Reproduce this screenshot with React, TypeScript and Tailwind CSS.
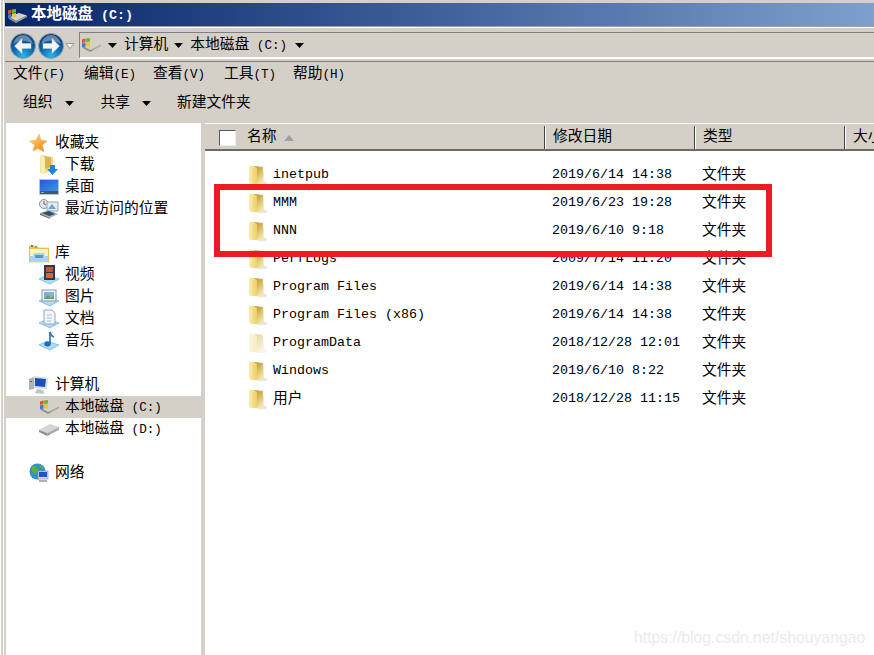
import React from "react";

const CJK = "font-['Liberation_Mono','Noto_Sans_CJK_SC',monospace]";

function Folder({ faded = false }: { faded?: boolean }) {
  const id = faded ? "ff" : "fn";
  return (
    <svg width="19" height="20" viewBox="0 0 19 20" style={{ opacity: faded ? 0.4 : 1 }} className="shrink-0">
      <defs>
        <linearGradient id={id + "a"} x1="0" y1="0" x2="1" y2="0">
          <stop offset="0" stopColor="#fbeeaa" />
          <stop offset="1" stopColor="#eccf6c" />
        </linearGradient>
        <linearGradient id={id + "b"} x1="0" y1="0" x2="0.6" y2="1">
          <stop offset="0" stopColor="#b98c1e" />
          <stop offset="1" stopColor="#f6e8a6" />
        </linearGradient>
      </defs>
      <path d="M8 17 L18 17 L17 20 L8 20Z" fill="#cfcfcf" opacity="0.55" />
      <path d="M5 1 L14 2 L15 18 L6 19Z" fill={`url(#${id}b)`} />
      <path d="M0 2 L1.5 0.5 L5 1 L8 3 L8 19 L1.5 19 L0 17Z" fill={`url(#${id}a)`} />
    </svg>
  );
}

function Drive() {
  return (
    <svg width="20" height="14" viewBox="0 0 20 14">
      <path d="M2 8 L12 4 L20 6.5 L9 12Z" fill="#d2d2c8" />
      <path d="M2 8 L9 12 L9 14 L2 10Z" fill="#8f8f86" />
      <path d="M9 12 L20 6.5 L20 8 L9 14Z" fill="#a5a59c" />
      <rect x="9" y="12" width="2" height="1" fill="#4aa84a" />
      <path d="M1 1.5 L4.5 0.5 L4.5 4 L1 5Z" fill="#e5522d" />
      <path d="M5 0.5 L9 0 L9 3.5 L5 4Z" fill="#6fb33f" />
      <path d="M1 5.5 L4.5 4.5 L4.5 8.5 L1 9.5Z" fill="#3c79d8" />
      <path d="M5 4.5 L9 4 L9 8 L5 8.5Z" fill="#f2c230" />
    </svg>
  );
}

function DriveGray() {
  return (
    <svg width="20" height="14" viewBox="0 0 20 14">
      <path d="M0 8 L11 2 L20 5 L8 11Z" fill="#d6d6d6" />
      <path d="M0 8 L8 11 L8 14 L0 10Z" fill="#8f8f8f" />
      <path d="M8 11 L20 5 L20 8 L8 14Z" fill="#adadad" />
      <rect x="9" y="12" width="2" height="1" fill="#5bb04a" />
    </svg>
  );
}

function Star() {
  return (
    <svg width="18" height="20" viewBox="0 0 18 20">
      <defs>
        <linearGradient id="st" x1="0" y1="0" x2="0.6" y2="1">
          <stop offset="0" stopColor="#ffe27a" />
          <stop offset="1" stopColor="#f08a1d" />
        </linearGradient>
      </defs>
      <path d="M10 1 L12 7 L18 8 L13.5 12 L15 19 L9 15.5 L4 18 L5.5 12 L0.5 8 L7 7Z" fill="url(#st)" stroke="#f3b14d" strokeWidth="0.5" />
    </svg>
  );
}

function Download() {
  return (
    <svg width="19" height="20" viewBox="0 0 19 20">
      <path d="M1 1 L5 0 L8 2 L14 2 L14 16 L3 19 L1 17Z" fill="#f3dc8c" />
      <path d="M5 1 L12 2 L12 12 L6 14Z" fill="#d9b64f" />
      <path d="M1 1 L6 2 L6 19 L2 19Z" fill="#fbeeb4" />
      <path d="M11 10 L16 10 L16 14 L19 14 L13.5 20 L8 14 L11 14Z" fill="#1f86d6" />
    </svg>
  );
}

function Desktop() {
  return (
    <svg width="20" height="16" viewBox="0 0 20 16">
      <rect x="0" y="0" width="20" height="16" fill="#b7c3d0" />
      <defs>
        <linearGradient id="dk" x1="0" y1="0" x2="1" y2="1">
          <stop offset="0" stopColor="#1d5ed0" />
          <stop offset="1" stopColor="#3c93ec" />
        </linearGradient>
      </defs>
      <rect x="1" y="1" width="18" height="11" fill="url(#dk)" />
      <rect x="1" y="12" width="18" height="3" fill="#3c5a73" />
      <rect x="2" y="13" width="3" height="1" fill="#7fc46f" />
    </svg>
  );
}

function Recent() {
  return (
    <svg width="20" height="20" viewBox="0 0 20 20">
      <circle cx="5" cy="5" r="4.5" fill="#dfe3e6" stroke="#8f979c" />
      <path d="M5 2 L5 5 L7 6" stroke="#666" fill="none" />
      <path d="M8 3 L19 3 L19 12 L8 12Z" fill="#e6ebf0" stroke="#9aa5ad" />
      <path d="M9 10 L13 5 L17 10Z" fill="#63a6e0" />
      <path d="M1 14 L10 11 L19 15 L11 19Z" fill="#a7adb2" />
      <path d="M3 14 L10 12 L16 15 L10 17Z" fill="#33506e" />
      <path d="M1 14 L11 19 L11 20 L1 16Z" fill="#777" />
    </svg>
  );
}

function Library() {
  return (
    <svg width="20" height="19" viewBox="0 0 20 19">
      <path d="M0 2 L7 2 L9 4 L20 4 L20 18 L0 18Z" fill="#e9c95f" stroke="#c9a640" strokeWidth="0.5" />
      <rect x="2" y="1" width="2" height="2" fill="#d9503a" />
      <rect x="6" y="2" width="2" height="2" fill="#6fb33f" />
      <rect x="1" y="5" width="18" height="13" fill="#fdf3c0" />
      <path d="M1 12 L4 12 L5 9 L15 9 L16 12 L19 12 L19 18 L1 18Z" fill="#a9d3ee" />
      <rect x="6" y="11" width="8" height="3" fill="#5b93bf" />
    </svg>
  );
}

function LibBase() {
  return <path d="M0 14 L8 10 L20 14 L11 19Z" fill="#aedcf7" stroke="#6db2de" strokeWidth="0.7" />;
}

function Video() {
  return (
    <svg width="20" height="20" viewBox="0 0 20 20">
      <LibBase />
      <rect x="5" y="0" width="11" height="15" fill="#263b4d" />
      <rect x="7" y="2" width="7" height="5" fill="#c8512c" />
      <rect x="7" y="8" width="7" height="5" fill="#d66a2f" />
    </svg>
  );
}

function Pics() {
  return (
    <svg width="20" height="20" viewBox="0 0 20 20">
      <LibBase />
      <rect x="3" y="3" width="14" height="11" fill="#eef2f5" stroke="#8a99a6" />
      <rect x="5" y="5" width="10" height="7" fill="#7fb2dc" />
      <path d="M5 12 L9 8 L12 11 L15 9 L15 12Z" fill="#6e9c57" />
    </svg>
  );
}

function Docs() {
  return (
    <svg width="20" height="20" viewBox="0 0 20 20">
      <LibBase />
      <path d="M5 1 L13 1 L16 4 L16 15 L5 15Z" fill="#f2f5f8" stroke="#9aa8b3" />
      <path d="M8 6 L13 6 M8 9 L13 9 M8 12 L12 12" stroke="#9ec3de" />
    </svg>
  );
}

function Music() {
  return (
    <svg width="20" height="20" viewBox="0 0 20 20">
      <LibBase />
      <path d="M11 1 L11 13" stroke="#1c6fc0" strokeWidth="1.6" />
      <path d="M11 1 Q12 5 15 6" stroke="#1c6fc0" strokeWidth="1.4" fill="none" />
      <ellipse cx="8.5" cy="13" rx="3.2" ry="2.5" fill="#1c6fc0" />
    </svg>
  );
}

function Computer() {
  return (
    <svg width="20" height="19" viewBox="0 0 20 19">
      <path d="M0 3 L5 1 L5 13 L0 14Z" fill="#aab4bf" />
      <path d="M5 0 L19 2 L18 13 L5 12Z" fill="#d8dee4" />
      <path d="M6 2 L17 3 L16 11 L6 10Z" fill="#1b4fbd" />
      <path d="M8 13 L14 14 L15 18 L6 17Z" fill="#bcc4cb" />
      <rect x="1" y="5" width="2" height="1" fill="#54606b" />
    </svg>
  );
}

function Network() {
  return (
    <svg width="20" height="20" viewBox="0 0 20 20">
      <circle cx="8.5" cy="8.5" r="8" fill="#2f8fd3" />
      <path d="M3 3 Q8 3 9 7 Q8 11 5 11 Q2 9 3 3Z M10 1 Q14 2 15 6 L11 5Z" fill="#5daf3c" />
      <rect x="9" y="8" width="10" height="8" fill="#d5dbe0" stroke="#7c8892" strokeWidth="0.6" />
      <rect x="10" y="9" width="8" height="5" fill="#1f55c0" />
      <rect x="10" y="17" width="8" height="2" fill="#aab3ba" />
    </svg>
  );
}

function NavButton({ dir }: { dir: "l" | "r" }) {
  const id = "nb" + dir;
  return (
    <svg width="26" height="26" viewBox="0 0 26 26">
      <defs>
        <radialGradient id={id} cx="0.5" cy="0.9" r="0.85">
          <stop offset="0" stopColor="#2ab4ea" />
          <stop offset="0.55" stopColor="#0b64a8" />
          <stop offset="1" stopColor="#0a3a70" />
        </radialGradient>
      </defs>
      <circle cx="13" cy="13" r="12.5" fill={`url(#${id})`} stroke="#8fa6b8" />
      <path d="M3 11 Q13 4 23 11 Q20 2 13 2 Q6 2 3 11Z" fill="#ffffff" opacity="0.35" />
      <g transform={dir === "r" ? "rotate(180 13 13)" : undefined}>
        <path d="M4.5 13 L12 5.5 L12 10.5 L21 10.5 L21 15.5 L12 15.5 L12 20.5Z" fill="#f2f4f6" stroke="#c8ced3" strokeWidth="0.5" />
      </g>
    </svg>
  );
}

function Tri({ className = "" }: { className?: string }) {
  return (
    <svg width="9" height="5" viewBox="0 0 9 5" className={`shrink-0 ${className}`}>
      <path d="M0 0 L9 0 L4.5 5Z" fill="#000000" />
    </svg>
  );
}

function DriveLabel({ letter, latin }: { letter: string; latin: string }) {
  return (
    <span className="whitespace-pre">
      本地磁盘<span className={latin}> ({letter}:)</span>
    </span>
  );
}

type Side = { key: string; label: React.ReactNode; icon: React.ReactNode; sub?: boolean; sel?: boolean };

const LATIN_SM = "text-[12.6px]";

const groups: Side[][] = [
  [
    { key: "fav", label: "收藏夹", icon: <Star /> },
    { key: "dl", label: "下载", icon: <Download />, sub: true },
    { key: "desk", label: "桌面", icon: <Desktop />, sub: true },
    { key: "rec", label: "最近访问的位置", icon: <Recent />, sub: true },
  ],
  [
    { key: "lib", label: "库", icon: <Library /> },
    { key: "vid", label: "视频", icon: <Video />, sub: true },
    { key: "pic", label: "图片", icon: <Pics />, sub: true },
    { key: "doc", label: "文档", icon: <Docs />, sub: true },
    { key: "mus", label: "音乐", icon: <Music />, sub: true },
  ],
  [
    { key: "pc", label: "计算机", icon: <Computer /> },
    { key: "c", label: <DriveLabel letter="C" latin={LATIN_SM} />, icon: <Drive />, sub: true, sel: true },
    { key: "d", label: <DriveLabel letter="D" latin={LATIN_SM} />, icon: <DriveGray />, sub: true },
  ],
  [{ key: "net", label: "网络", icon: <Network /> }],
];

const files: { name: string; date: string; faded?: boolean }[] = [
  { name: "inetpub", date: "2019/6/14 14:38" },
  { name: "MMM", date: "2019/6/23 19:28" },
  { name: "NNN", date: "2019/6/10 9:18" },
  { name: "PerfLogs", date: "2009/7/14 11:20" },
  { name: "Program Files", date: "2019/6/14 14:38" },
  { name: "Program Files (x86)", date: "2019/6/14 14:38" },
  { name: "ProgramData", date: "2018/12/28 12:01", faded: true },
  { name: "Windows", date: "2019/6/10 8:22" },
  { name: "用户", date: "2018/12/28 11:15" },
];

const menus = [
  { t: "文件", k: "(F)", w: "w-[71px]" },
  { t: "编辑", k: "(E)", w: "w-[69px]" },
  { t: "查看", k: "(V)", w: "w-[71px]" },
  { t: "工具", k: "(T)", w: "w-[69px]" },
  { t: "帮助", k: "(H)", w: "w-[71px]" },
];

export default function App() {
  return (
    <div className={`w-[874px] h-[655px] overflow-hidden relative bg-white border-l border-l-white text-[14.75px] leading-none text-black ${CJK}`}>
      <div className="h-full border-l-2 border-l-[#d4d0c8]">
        <div className="h-full border-l border-l-white">
          <div className="flex flex-col h-full pl-[2px] pt-[3px] bg-[#d4d0c8]">
            {/* title bar */}
            <div className="flex items-center h-[23px] shrink-0 -ml-px pl-[2px] pt-[2px] gap-[4px] bg-gradient-to-r from-[#0a246a] to-[#7f9fcc] text-white font-bold text-[15.5px]">
              <Drive />
              <span className="whitespace-pre">
                本地磁盘<span className="text-[13.33px]"> (C:)</span>
              </span>
            </div>
            <div className="h-px shrink-0 -ml-px bg-[#a0a0a0]" />
            {/* nav */}
            <div className="flex items-center h-[34px] shrink-0 -ml-px pt-[2px] pl-[5px] border-t border-t-white">
              <div className="flex items-center gap-[2px]">
                <NavButton dir="l" />
                <NavButton dir="r" />
              </div>
              <svg width="10" height="6" viewBox="0 0 10 6" className="ml-[1px] shrink-0">
                <path d="M1 0.5 L9 0.5 L5 5.5Z" fill="#f4f4f4" stroke="#8a8a8a" strokeWidth="0.8" />
              </svg>
              <div className="flex items-center flex-1 h-[27px] ml-[4px] pl-[1px] bg-[#d4d0c8] border-l border-t border-l-[#808080] border-t-[#808080] border-b-2 border-b-white">
                <Drive />
                <Tri className="ml-[7px]" />
                <span className="ml-[7px]">计算机</span>
                <Tri className="ml-[6px]" />
                <span className="ml-[7px]">
                  <DriveLabel letter="C" latin={LATIN_SM} />
                </span>
                <Tri className="ml-[8px]" />
              </div>
            </div>
            {/* menu */}
            <div className="flex items-center h-[26px] shrink-0 -ml-px pl-[8px] border-t border-t-[#808080]">
              {menus.map((m) => (
                <span key={m.t} className={`${m.w} whitespace-pre`}>
                  {m.t}
                  <span className={LATIN_SM}>{m.k}</span>
                </span>
              ))}
            </div>
            {/* toolbar */}
            <div className="flex items-center h-[33px] shrink-0 -ml-px pl-[18px]">
              <span>组织</span>
              <Tri className="ml-[12px]" />
              <span className="ml-[27px]">共享</span>
              <Tri className="ml-[12px]" />
              <span className="ml-[26px]">新建文件夹</span>
            </div>
            {/* body */}
            <div className="flex flex-1 min-h-0 mt-[3px]">
              {/* sidebar */}
              <div className="w-[195px] shrink-0 bg-white pt-[9px] flex flex-col gap-[22px]">
                {groups.map((g, i) => (
                  <div key={i} className="flex flex-col">
                    {g.map((s) => (
                      <div key={s.key} className={`flex items-center h-[22px] ${s.sel ? "bg-[#d4d0c8]" : ""} ${s.sub ? "pl-[33px]" : "pl-[23px]"}`}>
                        <span className="w-[26px] h-[20px] shrink-0 flex items-center">{s.icon}</span>
                        <span>{s.label}</span>
                      </div>
                    ))}
                  </div>
                ))}
              </div>
              {/* list */}
              <div className="flex-1 min-w-0 ml-[4px] bg-white flex flex-col">
                <div className="flex h-[28px] shrink-0 pt-[2px] bg-[#d4d0c8] border-t border-t-white border-b-2 border-b-[#6b6b6b]">
                  <div className="flex items-center w-[340px] pl-[14px] border-r border-r-[#404040] shrink-0">
                    <span className="w-[17px] h-[16px] bg-white border border-l-[#555555] border-t-[#555555] border-r-[#eeeeee] border-b-[#eeeeee]" />
                    <span className="ml-[11px]">名称</span>
                    <svg width="10" height="6" viewBox="0 0 10 6" className="ml-[7px]">
                      <path d="M0 6 L5 0 L10 6Z" fill="#a0a0a0" />
                    </svg>
                  </div>
                  <div className="flex items-center w-[150px] pl-[7px] border-l border-l-white border-r border-r-[#404040] shrink-0">修改日期</div>
                  <div className="flex items-center w-[150px] pl-[7px] border-l border-l-white border-r border-r-[#404040] shrink-0">类型</div>
                  <div className="flex items-center pl-[7px] border-l border-l-white whitespace-nowrap">大小</div>
                </div>
                <div className="flex flex-col pt-[10px]">
                  {files.map((f) => (
                    <div key={f.name} className="flex items-center h-[28px]">
                      <div className="flex items-center w-[347px] pl-[44px] shrink-0 text-[13.33px]">
                        <span className="w-[24px]">
                          <Folder faded={f.faded} />
                        </span>
                        <span className={`whitespace-pre ${f.name === "用户" ? "text-[14.75px]" : ""}`}>{f.name}</span>
                      </div>
                      <div className="w-[150px] shrink-0 text-[13.33px] whitespace-pre">{f.date}</div>
                      <div>文件夹</div>
                    </div>
                  ))}
                </div>
              </div>
            </div>
          </div>
        </div>
      </div>
      {/* annotation */}
      <div className="absolute left-[213px] top-[184px] w-[558px] h-[73px] border-[6px] border-[#ed1c24]" />
      <div className="absolute left-[633px] top-[630px] text-[15.75px] text-[#ebebeb] font-['Liberation_Sans',sans-serif]">https://blog.csdn.net/shouyangao</div>
    </div>
  );
}
